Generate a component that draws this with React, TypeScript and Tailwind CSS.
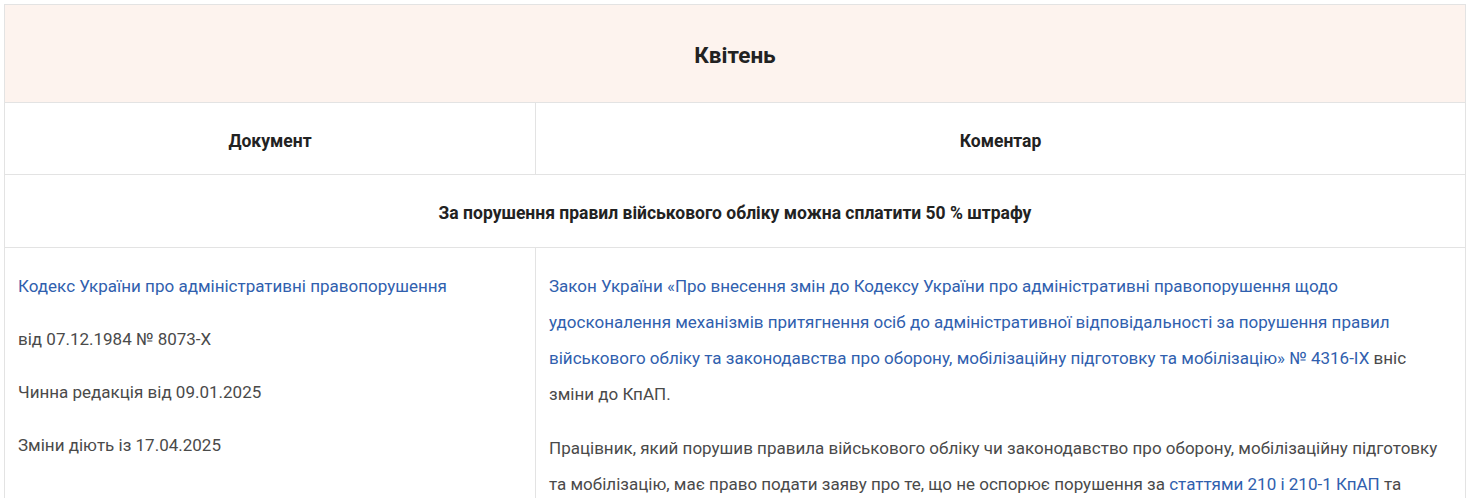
import React from "react";

const link = "text-[#3060ae]";

export default function App() {
  return (
    <div className="bg-white p-[4px] font-['Roboto',sans-serif] text-[17px] font-normal text-[#4a4a4a]">
      <table className="w-[1462px] border-collapse table-fixed">
        <colgroup>
          <col className="w-[531px]" />
          <col />
        </colgroup>
        <tbody>
          <tr>
            <td colSpan={2} className="h-[98px] pt-[4px] bg-[#fdf3ee] border border-[#e3e3e3] text-center align-middle text-[22.5px] font-bold text-[#222]">
              Квітень
            </td>
          </tr>
          <tr>
            <td className="h-[72px] pt-[6px] border border-[#e3e3e3] text-center align-middle text-[17.5px] font-bold text-[#222]">Документ</td>
            <td className="h-[72px] pt-[6px] border border-[#e3e3e3] text-center align-middle text-[17.5px] font-bold text-[#222]">Коментар</td>
          </tr>
          <tr>
            <td colSpan={2} className="h-[73px] pt-[4px] border border-[#e3e3e3] text-center align-middle text-[17.5px] font-bold text-[#222]">
              За порушення правил військового обліку можна сплатити 50 % штрафу
            </td>
          </tr>
          <tr>
            <td className="border border-[#e3e3e3] align-top px-[13px] pt-[20px] leading-[36px]">
              <p className={`mb-[17px] ${link}`}>Кодекс України про адміністративні правопорушення</p>
              <p className="mb-[17px]">від 07.12.1984 № 8073-Х</p>
              <p className="mb-[17px]">Чинна редакція від 09.01.2025</p>
              <p className="mb-[17px]">Зміни діють із 17.04.2025</p>
            </td>
            <td className="border border-[#e3e3e3] align-top px-[13px] pt-[20px] leading-[36px]">
              <p className="mb-[18px]">
                <span className={link}>
                  Закон України «Про внесення змін до Кодексу України про адміністративні правопорушення щодо удосконалення механізмів притягнення осіб до адміністративної відповідальності за порушення правил військового обліку та законодавства про оборону, мобілізаційну підготовку та мобілізацію» № 4316-IX
                </span>{" "}
                вніс зміни до КпАП.
              </p>
              <p className="mb-[18px]">
                Працівник, який порушив правила військового обліку чи законодавство про оборону, мобілізаційну підготовку та мобілізацію, має право подати заяву про те, що не оспорює порушення за{" "}
                <span className={link}>статтями 210 і 210-1 КпАП</span> та сплатити 50 % розміру штрафу.
              </p>
            </td>
          </tr>
        </tbody>
      </table>
    </div>
  );
}
